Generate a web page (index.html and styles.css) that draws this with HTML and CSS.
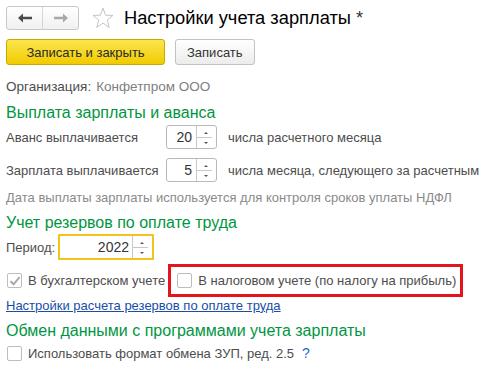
FILE: index.html
```html
<!DOCTYPE html>
<html lang="ru">

<head>
    <meta charset="UTF-8">
    <title>Настройки учета зарплаты</title>
    <link rel="stylesheet" href="styles.css">
</head>

<body>
    <div class="form">
        <div class="header">
            <div class="nav">
                <div class="nav-btn">
                    <svg width="14" height="10" viewBox="0 0 14 10"><path d="M0 5 L5 0.5 L5 3.8 L14 3.8 L14 6.2 L5 6.2 L5 9.5 Z" fill="#4a4a4a"/></svg>
                </div>
                <div class="nav-btn">
                    <svg width="14" height="10" viewBox="0 0 14 10"><path d="M14 5 L9 0.5 L9 3.8 L0 3.8 L0 6.2 L9 6.2 L9 9.5 Z" fill="#a8a8a8"/></svg>
                </div>
            </div>
            <svg class="star" width="22" height="22" viewBox="0 0 22 22"><path d="M11 1.2 L13.6 8.2 L21 8.4 L15.2 13 L17.3 20.4 L11 16.1 L4.7 20.4 L6.8 13 L1 8.4 L8.4 8.2 Z" fill="none" stroke="#c4c4c4" stroke-width="1"/></svg>
            <h1>Настройки учета зарплаты <span class="mod">*</span></h1>
        </div>

        <div class="toolbar">
            <button class="btn btn-main">Записать и закрыть</button>
            <button class="btn">Записать</button>
        </div>

        <div class="row org">
            <span class="label">Организация:</span>
            <span class="value">Конфетпром ООО</span>
        </div>

        <div class="group-title g1">Выплата зарплаты и аванса</div>

        <div class="row field-row r1">
            <span class="field-label">Аванс выплачивается</span>
            <div class="spin">
                <span class="spin-value">20</span>
                <span class="spin-btns"><span class="up"></span><span class="down"></span></span>
            </div>
            <span class="after">числа расчетного месяца</span>
        </div>

        <div class="row field-row r2">
            <span class="field-label">Зарплата выплачивается</span>
            <div class="spin">
                <span class="spin-value">5</span>
                <span class="spin-btns"><span class="up"></span><span class="down"></span></span>
            </div>
            <span class="after">числа месяца, следующего за расчетным</span>
        </div>

        <div class="row note">Дата выплаты зарплаты используется для контроля сроков уплаты НДФЛ</div>

        <div class="group-title g2">Учет резервов по оплате труда</div>

        <div class="row period">
            <span class="period-label">Период:</span>
            <div class="spin spin-year">
                <span class="spin-value">2022</span>
                <span class="spin-btns"><span class="up"></span><span class="down"></span></span>
            </div>
        </div>

        <div class="row checks">
            <label class="check disabled">
                <span class="box checked">
                    <svg width="12" height="12" viewBox="0 0 12 12"><path d="M1.5 6.2 L4.6 9.3 L10.6 2.2" fill="none" stroke="#a9a9a9" stroke-width="2"/></svg>
                </span>
                В бухгалтерском учете
            </label>
            <div class="highlight">
                <label class="check">
                    <span class="box"></span>
                    В налоговом учете (по налогу на прибыль)
                </label>
            </div>
        </div>

        <div class="row link-row"><a href="#">Настройки расчета резервов по оплате труда</a></div>

        <div class="group-title g3">Обмен данными с программами учета зарплаты</div>

        <div class="row last">
            <label class="check">
                <span class="box"></span>
                Использовать формат обмена ЗУП, ред. 2.5
            </label>
            <span class="help">?</span>
        </div>
    </div>
</body>

</html>
```

FILE: styles.css
```css
body {
    margin: 0;
    background-color: #fff;
    font-family: "Liberation Sans", Arial, sans-serif;
    font-size: 13px;
    color: #4d4d4d;
    overflow: hidden;
}

.form {
    padding: 0 6px;
    display: flex;
    flex-direction: column;
    white-space: nowrap;
}

.header {
    display: flex;
    align-items: center;
    margin-top: 6px;
    height: 24px;
}

.nav {
    display: flex;
    width: 71px;
    height: 22px;
    border: 1px solid #c8c8c8;
    border-radius: 3px;
    background: linear-gradient(#ffffff, #f0f0f0);
}

.nav-btn {
    flex: 1;
    display: flex;
    align-items: center;
    justify-content: center;
}

.nav-btn + .nav-btn {
    border-left: 1px solid #d6d6d6;
}

.star {
    margin-left: 13px;
}

h1 {
    margin: 0 0 0 10px;
    font-size: 18.3px;
    font-weight: normal;
    color: #000;
}

.mod {
    color: #333;
}

.toolbar {
    display: flex;
    gap: 10px;
    margin-top: 9px;
    height: 26px;
}

.btn {
    font-family: inherit;
    font-size: 13px;
    color: #333;
    height: 26px;
    padding: 0 11px;
    border: 1px solid #c2c2c2;
    border-radius: 3px;
    background: linear-gradient(#ffffff, #ececec);
}

.btn-main {
    width: 159px;
    border-color: #c9ab00;
    background: linear-gradient(#fbe54f, #f1cb00);
    color: #2a2a2a;
}

.row {
    display: flex;
    align-items: center;
}

.org {
    margin-top: 11px;
    height: 20px;
    font-size: 13.5px;
}

.org .value {
    margin-left: 5px;
    color: #808080;
}

.group-title {
    font-size: 16px;
    color: #00963f;
    height: 22px;
    line-height: 22px;
}

.g1 {
    margin-top: 6px;
}

.g2 {
    margin-top: 5px;
}

.g3 {
    margin-top: 7px;
}

.field-row {
    height: 24px;
}

.r1 {
    margin-top: 1px;
}

.r2 {
    margin-top: 9px;
}

.field-label {
    width: 160px;
    flex-shrink: 0;
}

.spin {
    display: flex;
    flex-shrink: 0;
    width: 49px;
    height: 22px;
    border: 1px solid #b9b9b9;
    border-radius: 3px;
    background: #fff;
}

.spin-value {
    flex: 1;
    text-align: right;
    padding-right: 4px;
    line-height: 22px;
    font-size: 14px;
    color: #333;
}

.spin-btns {
    width: 19px;
    display: flex;
    flex-direction: column;
    border-left: 1px solid #c8c8c8;
}

.spin-btns span {
    flex: 1;
    position: relative;
}

.spin-btns .up {
    border-bottom: 1px solid #c8c8c8;
    margin-right: 4px;
}

.spin-btns span::after {
    content: "";
    position: absolute;
    left: 7px;
    width: 0;
    height: 0;
    border-left: 2px solid transparent;
    border-right: 2px solid transparent;
}

.spin-btns .up::after {
    bottom: 3px;
    border-bottom: 2px solid #555;
}

.spin-btns .down::after {
    top: 4px;
    border-top: 2px solid #555;
}

.after {
    margin-left: 11px;
    flex-shrink: 0;
}

.note {
    margin-top: 5px;
    height: 20px;
    color: #8a8a8a;
}

.period {
    height: 26px;
}

.period-label {
    width: 52px;
}

.spin-year {
    width: 92px;
    border: 2px solid #f2c31a;
    border-radius: 1px;
}

.spin-year .spin-value {
    padding-right: 3px;
}

.checks {
    margin-top: 4px;
    height: 33px;
}

.check {
    display: flex;
    align-items: center;
}

.box {
    width: 13px;
    height: 13px;
    border: 1px solid #bdbdbd;
    border-radius: 2px;
    margin: 0 6px 0 1px;
    display: flex;
    align-items: center;
    justify-content: center;
    background: #fff;
}

.highlight {
    margin-left: 3px;
    height: 27px;
    padding: 0 4px 0 5px;
    display: flex;
    align-items: center;
    border: 3px solid #e3141e;
}

.link-row {
    height: 16px;
}

.link-row a {
    color: #1a4ea6;
}

.last {
    margin-top: 1px;
    height: 20px;
}

.help {
    margin-left: 8px;
    color: #1c6ec5;
    font-size: 14px;
}
```
